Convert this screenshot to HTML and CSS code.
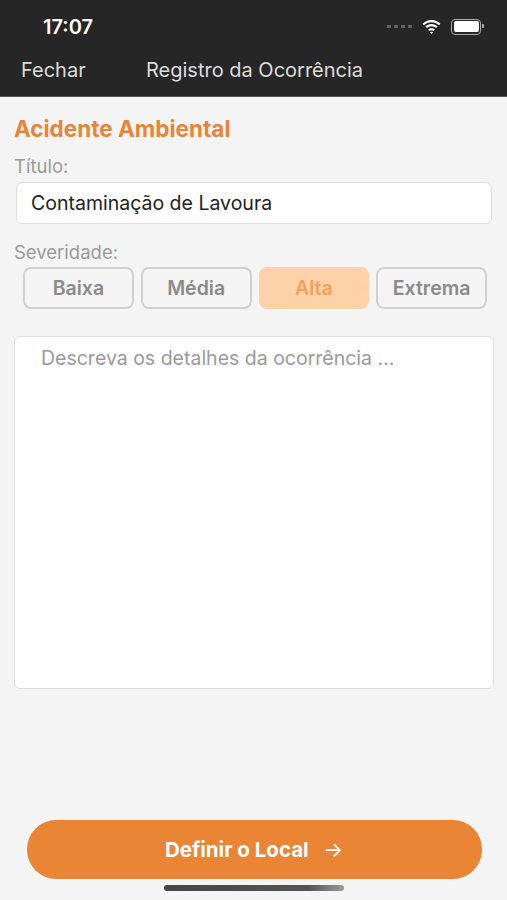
FILE: index.html
```html
<!DOCTYPE html>
<html lang="pt-BR">
<head>
    <meta charset="UTF-8">
    <meta name="viewport" content="width=device-width, initial-scale=1.0">
    <title>Registro da Ocorrência</title>
    <link rel="stylesheet" href="styles.css">
</head>
<body>

    <div class="screen">
        <div class="top">
            <div class="status">
                <span class="clock">17:07</span>
                <div class="status-icons">
                    <span class="dots"><i></i><i></i><i></i><i></i></span>
                    <svg class="wifi" width="19" height="14" viewBox="0 0 19 14">
                        <path d="M9.5 2.2c2.9 0 5.5 1.1 7.5 3l1.5-1.5C16.1 1.4 12.9 0 9.5 0S2.9 1.4.5 3.7L2 5.2c2-1.9 4.6-3 7.5-3z" fill="#fff"/>
                        <path d="M9.5 6.3c1.8 0 3.4.7 4.6 1.8l1.5-1.5C14 5 11.9 4.1 9.5 4.1S5 5 3.4 6.6l1.5 1.5c1.2-1.1 2.8-1.8 4.6-1.8z" fill="#fff"/>
                        <path d="M9.5 10.3c.7 0 1.3.3 1.8.7l1.5-1.5c-.9-.8-2-1.3-3.3-1.3s-2.4.5-3.3 1.3L7.7 11c.5-.4 1.1-.7 1.8-.7z" fill="#fff"/>
                        <path d="M9.5 14l1.7-1.7c-.4-.4-1.1-.6-1.7-.6s-1.3.2-1.7.6z" fill="#fff"/>
                    </svg>
                    <span class="battery"><span class="level"></span></span>
                </div>
            </div>
            <div class="navbar">
                <a class="close">Fechar</a>
                <span class="title">Registro da Ocorrência</span>
            </div>
        </div>

        <div class="content">
            <h1 class="category">Acidente Ambiental</h1>

            <label class="label">Título:</label>
            <input class="field" type="text" value="Contaminação de Lavoura">

            <label class="label label-sev">Severidade:</label>
            <div class="severity">
                <button class="sev">Baixa</button>
                <button class="sev">Média</button>
                <button class="sev active">Alta</button>
                <button class="sev">Extrema</button>
            </div>

            <textarea class="details" placeholder="Descreva os detalhes da ocorrência ..."></textarea>
        </div>

        <div class="footer">
            <button class="next">Definir o Local <span class="arrow">&rarr;</span></button>
            <div class="home-bar"></div>
        </div>
    </div>

</body>
</html>
```

FILE: styles.css
```css
body {
    margin: 0;
    font-family: Inter, "Noto Sans", sans-serif;
    background-color: #f4f4f4;
}
.screen {
    width: 507px;
    height: 900px;
    display: flex;
    flex-direction: column;
    overflow: hidden;
}
.top {
    background-color: #262626;
    border-bottom: 1px solid #555;
}
.status {
    height: 50px;
    display: flex;
    align-items: center;
    justify-content: space-between;
    padding: 0 26px 0 43px;
    box-sizing: border-box;
}
.clock {
    color: #fff;
    font-weight: 600;
    font-size: 20px;
    line-height: 24px;
    margin-top: 4px;
}
.status-icons {
    display: flex;
    align-items: center;
    gap: 8px;
    margin-top: 3px;
}
.dots {
    display: flex;
    gap: 3px;
    margin-right: 2px;
}
.dots i {
    width: 4px;
    height: 3px;
    border-radius: 1px;
    background: #666;
}
.battery {
    position: relative;
    width: 25px;
    height: 11px;
    border: 1.5px solid #aaa;
    border-radius: 4px;
    padding: 1.5px;
    margin-left: 2px;
}
.battery::after {
    content: "";
    position: absolute;
    right: -4px;
    top: 4px;
    width: 2px;
    height: 4px;
    background: #aaa;
    border-radius: 0 1px 1px 0;
}
.level {
    display: block;
    width: 100%;
    height: 100%;
    background: #fff;
    border-radius: 2px;
}
.navbar {
    height: 46px;
    box-sizing: border-box;
    display: flex;
    align-items: center;
    padding: 0 21px 6px;
    font-size: 20px;
    line-height: 24px;
    color: #ddd;
}
.close {
    width: 125px;
}
.content {
    flex: 1;
    display: flex;
    flex-direction: column;
    padding: 19px 13px 0 14px;
}
.category {
    margin: 0;
    font-size: 22.5px;
    line-height: 26px;
    font-weight: 700;
    color: #e8843a;
}
.label {
    margin-top: 13px;
    font-size: 18.5px;
    line-height: 22px;
    color: #9a9a9a;
}
.label-sev {
    margin-top: 17px;
}
.field {
    margin: 5px 2px 0 2px;
    height: 42px;
    box-sizing: border-box;
    border: 1px solid #ddd;
    border-radius: 6px;
    background: #fff;
    padding: 0 14px;
    font-family: inherit;
    font-size: 19.5px;
    color: #222;
}
.severity {
    display: grid;
    grid-template-columns: repeat(4, 1fr);
    gap: 7px;
    padding: 0 7px 0 9px;
    margin-top: 4px;
}
.sev {
    height: 42px;
    border: 2px solid #d0d0d0;
    border-radius: 8px;
    background: #f4f4f4;
    font-family: inherit;
    font-size: 19.5px;
    font-weight: 600;
    color: #8a8a8a;
}
.sev.active {
    background: #fdd2a8;
    border-color: #fdd2a8;
    color: #f0a25c;
}
.details {
    margin-top: 27px;
    height: 353px;
    box-sizing: border-box;
    border: 1px solid #ddd;
    border-radius: 6px;
    background: #fff;
    padding: 9px 26px;
    font-family: inherit;
    font-size: 19.5px;
    line-height: 24px;
    resize: none;
}
.details::placeholder {
    color: #9a9a9a;
}
.footer {
    display: flex;
    flex-direction: column;
    align-items: center;
    padding-bottom: 9px;
}
.next {
    width: 455px;
    height: 59px;
    border: none;
    border-radius: 29px;
    background: #ea8536;
    color: #fff;
    font-family: inherit;
    font-size: 20.5px;
    font-weight: 700;
    margin-left: 1px;
}
.arrow {
    margin-left: 10px;
    font-weight: 400;
}
.home-bar {
    width: 180px;
    height: 6px;
    border-radius: 3px;
    background: linear-gradient(to right, #444, #555 80%, #999);
    margin-top: 6px;
}
```
